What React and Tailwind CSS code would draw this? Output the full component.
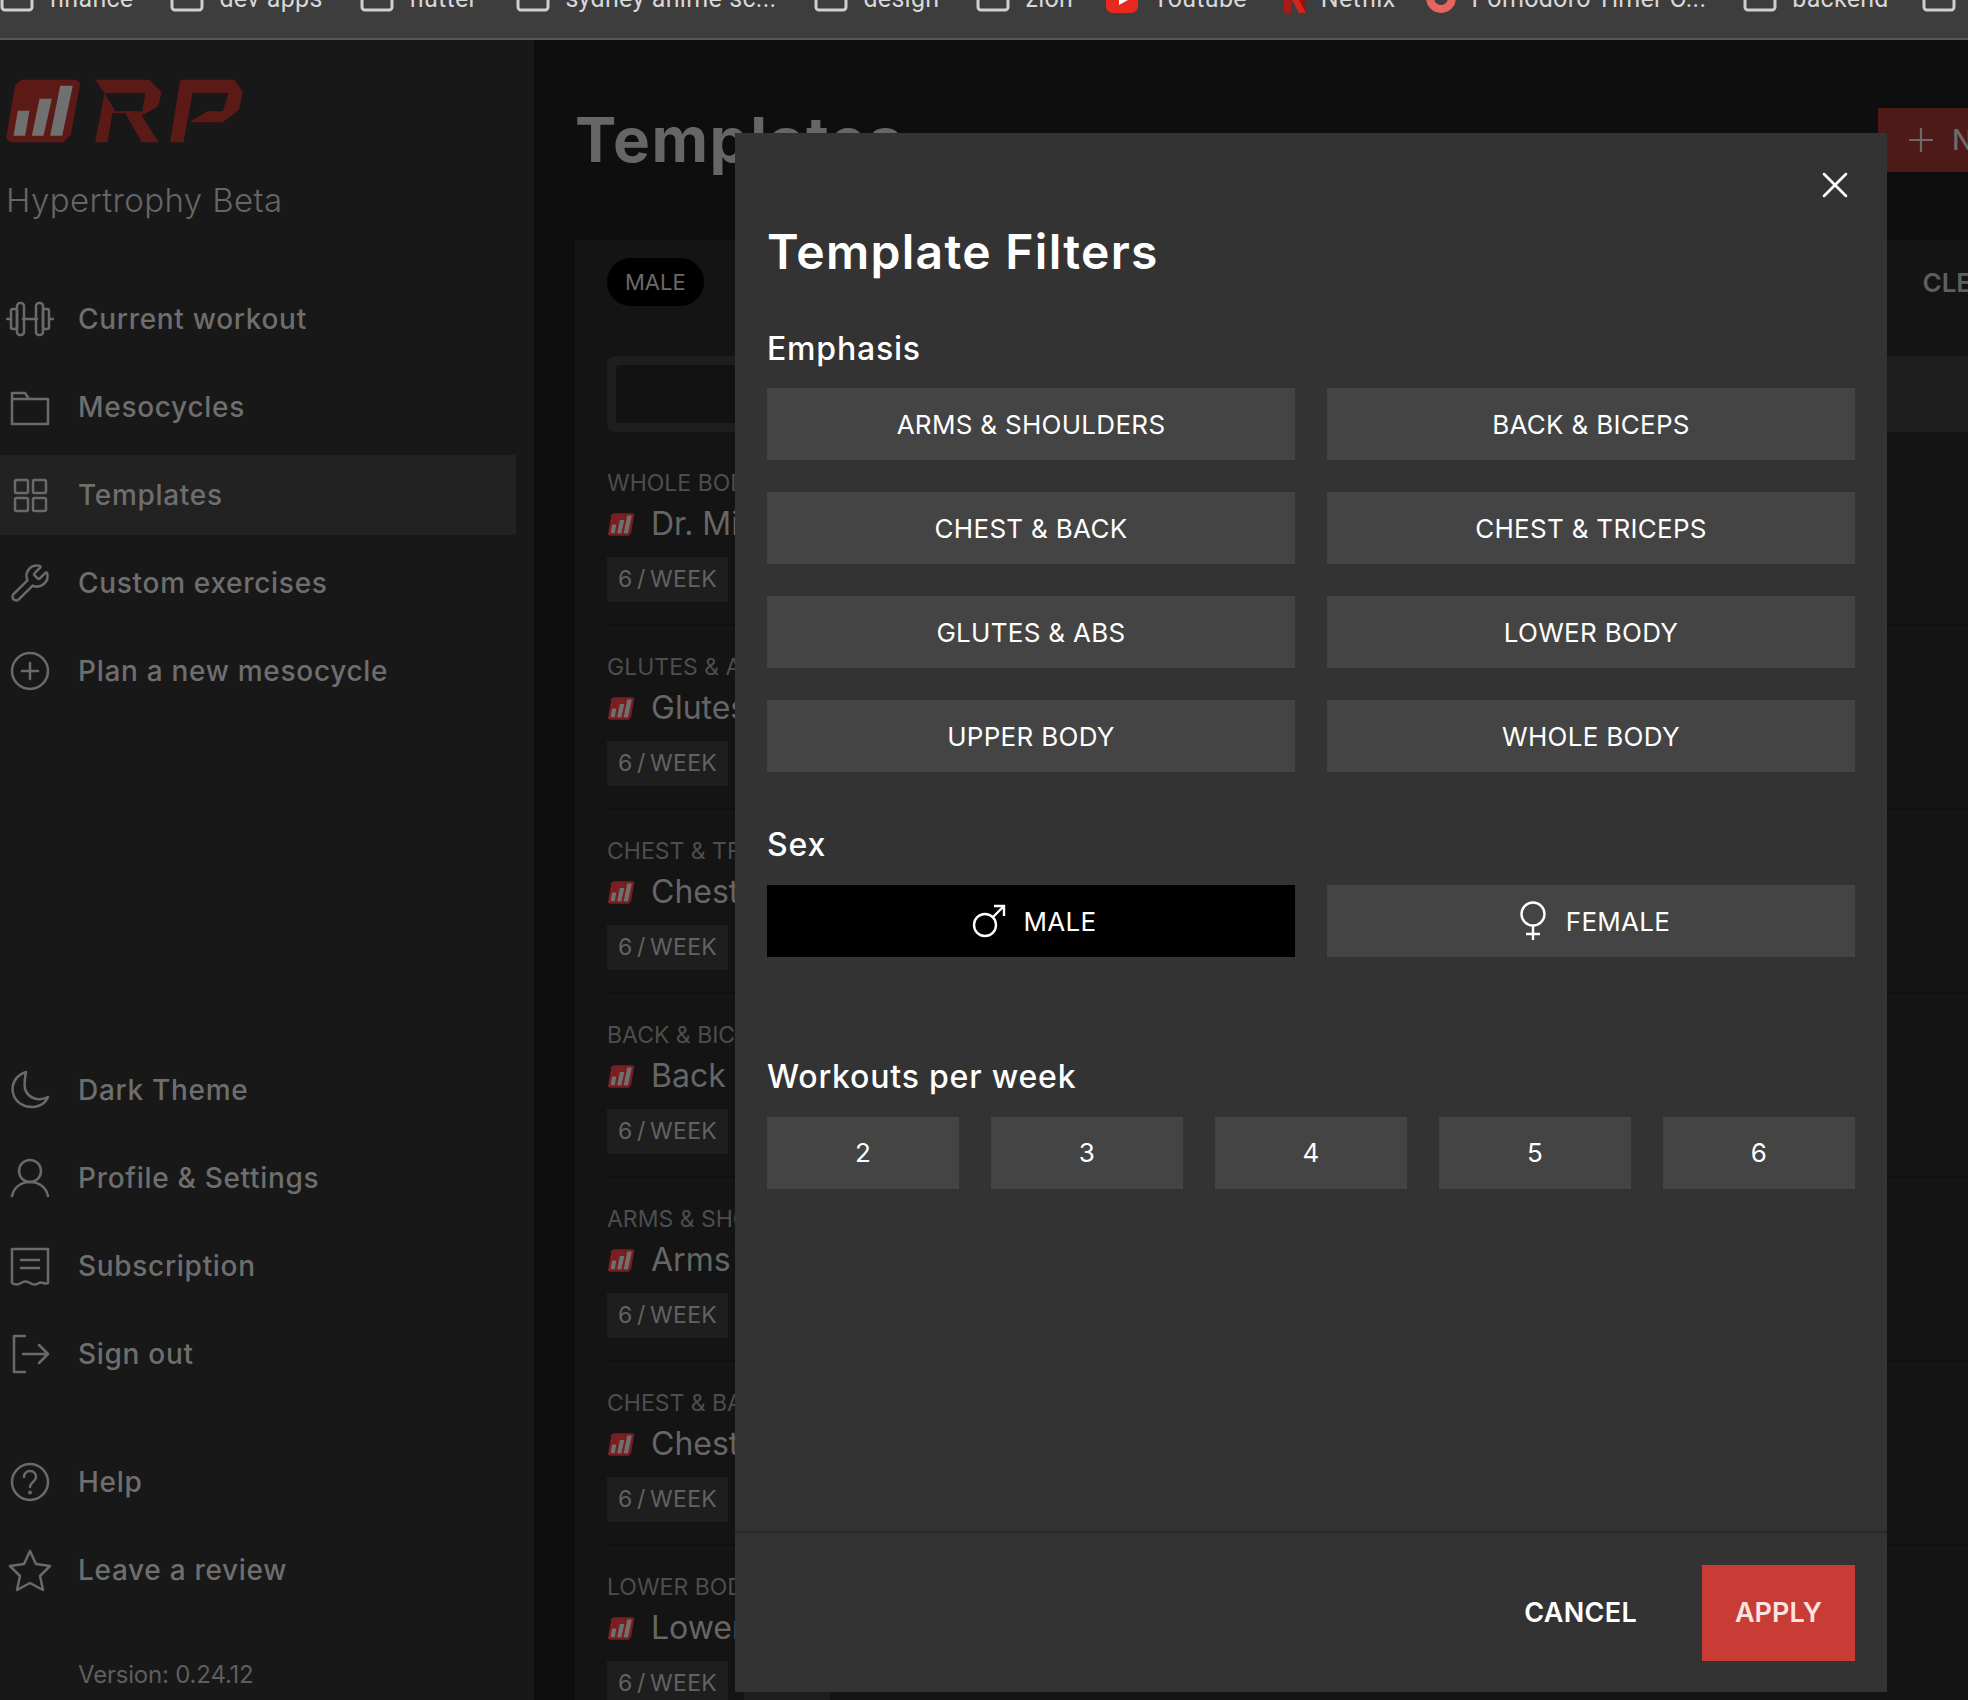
import React from "react";
import { Wrench, X, Plus } from "lucide-react";

const bookmarks = [
    { label: "finance", icon: "folder", gap: "mr-[37px]" },
    { label: "dev-apps", icon: "folder", gap: "mr-[37px]" },
    { label: "flutter", icon: "folder", gap: "mr-[39px]" },
    { label: "sydney-anime-sc...", icon: "folder", gap: "mr-[38px]" },
    { label: "design", icon: "folder", gap: "mr-[37px]" },
    { label: "zion", icon: "folder", gap: "mr-[33px]" },
    { label: "Youtube", icon: "youtube", gap: "mr-[37px]" },
    { label: "Netflix", icon: "netflix", gap: "mr-[31px]" },
    { label: "Pomodoro Timer O...", icon: "tomato", gap: "mr-[37px]" },
    { label: "backend", icon: "folder", gap: "mr-[33px]" },
    { label: "", icon: "folder", gap: "" },
];

const BookmarkIcon = ({ type }) => {
    if (type === "youtube") {
        return (
            <svg viewBox="0 0 32 28" className="h-7 w-8 shrink-0">
                <rect x="0" y="0" width="32" height="28" rx="7" fill="#e8291f" />
                <path d="M13 10l9 5-9 5z" fill="#fff" />
            </svg>
        );
    }
    if (type === "netflix") {
        return (
            <svg viewBox="0 0 22 28" className="h-7 w-[22px] shrink-0">
                <path d="M0 0h7v28H0z" fill="#a61c14" />
                <path d="M15 0h7v28h-7z" fill="#8f1610" />
                <path d="M0 0h7l15 28h-7z" fill="#d3251b" />
            </svg>
        );
    }
    if (type === "tomato") {
        return (
            <svg viewBox="0 0 30 28" className="h-7 w-[30px] shrink-0">
                <circle cx="15" cy="13" r="11" fill="none" stroke="#e8645e" strokeWidth="8" />
            </svg>
        );
    }
    return (
        <svg viewBox="0 0 34 28" className="h-7 w-[34px] shrink-0" fill="none" stroke="#cfcfcf" strokeWidth="3">
            <path d="M2 0v22a3 3 0 0 0 3 3h24a3 3 0 0 0 3-3V0" />
        </svg>
    );
};

const iconProps = {
    viewBox: "0 0 40 40",
    fill: "none",
    stroke: "#6a6a6a",
    strokeWidth: 2.5,
    strokeLinecap: "round",
    strokeLinejoin: "round",
    className: "h-10 w-10",
};

const DumbbellIcon = () => (
    <svg viewBox="0 0 48 40" fill="none" stroke="#6a6a6a" strokeWidth="2.5" strokeLinecap="round" strokeLinejoin="round" className="h-10 w-12">
        <path d="M1 20h4M47 20h-4M17 20h14" />
        <rect x="5" y="10" width="6" height="20" rx="2" />
        <rect x="11" y="4" width="7" height="32" rx="3" />
        <rect x="30" y="4" width="7" height="32" rx="3" />
        <rect x="37" y="10" width="6" height="20" rx="2" />
    </svg>
);

const FolderIcon = () => (
    <svg {...iconProps}>
        <path d="M2 6h13l4 6h19v25H2z" />
        <path d="M2 12h17" />
    </svg>
);

const GridIcon = () => (
    <svg {...iconProps}>
        <rect x="5" y="5" width="13" height="13" rx="1.5" />
        <rect x="23" y="5" width="13" height="13" rx="1.5" />
        <rect x="5" y="23" width="13" height="13" rx="1.5" />
        <rect x="23" y="23" width="13" height="13" rx="1.5" />
    </svg>
);

const PlusCircleIcon = () => (
    <svg {...iconProps}>
        <circle cx="20" cy="20" r="18" />
        <path d="M20 12v16M12 20h16" />
    </svg>
);

const MoonIcon = () => (
    <svg {...iconProps}>
        <path d="M16 2C6 5 1 14 3 23c2 9 11 15 21 14 7-1 12-5 14-10-10 5-20 1-23-8-1-6 0-12 1-17z" />
    </svg>
);

const UserIcon = () => (
    <svg {...iconProps}>
        <circle cx="20" cy="13" r="11" />
        <path d="M2 38c2-9 9-14 18-14s16 5 18 14" />
    </svg>
);

const ReceiptIcon = () => (
    <svg {...iconProps}>
        <path d="M2 3h36v34c-3 2-6-2-9 0s-6 2-9 0-6-2-9 0-6 2-9 0z" />
        <path d="M11 14h18M11 22h18" />
    </svg>
);

const SignOutIcon = () => (
    <svg {...iconProps}>
        <path d="M15 2H4v36h11" />
        <path d="M13 20h25M29 11l9 9-9 9" />
    </svg>
);

const HelpIcon = () => (
    <svg {...iconProps}>
        <circle cx="20" cy="20" r="18" />
        <path d="M14 15c0-4 3-6 6-6s6 2 6 6c0 5-6 5-6 10" />
        <circle cx="20" cy="30.5" r="0.8" />
    </svg>
);

const StarIcon = () => (
    <svg {...iconProps} viewBox="0 0 44 44" className="h-11 w-11">
        <path d="M22 3l6 13 14 2-10 10 3 14-13-7-13 7 3-14L2 18l14-2z" />
    </svg>
);

const BarsBadge = ({ red, bars, className }) => (
    <svg viewBox="10 55 235 198" className={className}>
        <path d="M65 60H228L240 70L212 225L190 248H30L18 235L45 75Z" fill={red} />
        <path d="M40 228H75L88 153H53Z" fill={bars} />
        <path d="M95 228H130L155 117H118Z" fill={bars} />
        <path d="M150 228H186L218 78H180Z" fill={bars} />
    </svg>
);

const Logo = () => (
    <svg viewBox="0 0 710 192" className="h-16 w-[237px]">
        <g transform="translate(-18 -58)">
            <path d="M65 60H228L240 70L212 225L190 248H30L18 235L45 75Z" fill="#5c1a16" />
            <path d="M40 228H75L88 153H53Z" fill="#707070" />
            <path d="M95 228H130L155 117H118Z" fill="#707070" />
            <path d="M150 228H186L218 78H180Z" fill="#707070" />
            <path
                fillRule="evenodd"
                d="M285 60H448L484 98L474 140L425 168L475 248H425L375 160H337L322 248H285L313 100ZM313 100L345 155H426L436 100Z"
                fill="#5c1a16"
            />
            <path d="M540 60H703L728 98L716 150L668 188H568L622 155H668L685 100H577L550 248H510Z" fill="#5c1a16" />
        </g>
    </svg>
);

const topNav = [
    { label: "Current workout", icon: <DumbbellIcon /> },
    { label: "Mesocycles", icon: <FolderIcon /> },
    { label: "Templates", icon: <GridIcon />, active: true },
    { label: "Custom exercises", icon: <Wrench size={42} strokeWidth={1.45} color="#6a6a6a" /> },
    { label: "Plan a new mesocycle", icon: <PlusCircleIcon /> },
];

const accountNav = [
    { label: "Dark Theme", icon: <MoonIcon /> },
    { label: "Profile & Settings", icon: <UserIcon /> },
    { label: "Subscription", icon: <ReceiptIcon /> },
    { label: "Sign out", icon: <SignOutIcon /> },
];

const helpNav = [
    { label: "Help", icon: <HelpIcon /> },
    { label: "Leave a review", icon: <StarIcon /> },
];

const NavRow = ({ item }) => (
    <div className={`flex h-20 items-center ${item.active ? "bg-[#222222]" : ""}`}>
        <span className="flex w-[60px] shrink-0 items-center justify-center">{item.icon}</span>
        <span className="ml-[18px] text-[28px] font-medium tracking-[0.7px] text-[#6e6e6e]">{item.label}</span>
    </div>
);

const templates = [
    { group: "WHOLE BODY", title: "Dr. Mike's Full Body" },
    { group: "GLUTES & ABS", title: "Glutes & Abs" },
    { group: "CHEST & TRICEPS", title: "Chest & Triceps" },
    { group: "BACK & BICEPS", title: "Back & Biceps" },
    { group: "ARMS & SHOULDERS", title: "Arms & Shoulders" },
    { group: "CHEST & BACK", title: "Chest & Back" },
    { group: "LOWER BODY", title: "Lower Body" },
];

const emphasis = [
    "ARMS & SHOULDERS",
    "BACK & BICEPS",
    "CHEST & BACK",
    "CHEST & TRICEPS",
    "GLUTES & ABS",
    "LOWER BODY",
    "UPPER BODY",
    "WHOLE BODY",
];

const MaleIcon = () => (
    <svg viewBox="0 0 34 34" fill="none" stroke="#fff" strokeWidth="2.4" className="h-[34px] w-[34px]">
        <circle cx="13" cy="21" r="11" />
        <path d="M21 13L32 2M22 2h10v10" />
    </svg>
);

const FemaleIcon = () => (
    <svg viewBox="0 0 30 40" fill="none" stroke="#fff" strokeWidth="2.4" className="h-10 w-[30px]">
        <circle cx="15" cy="13" r="11.5" />
        <path d="M15 25v14M8 33h14" />
    </svg>
);

const FilterButton = ({ children, dark, className = "" }) => (
    <button className={`flex h-[72px] items-center justify-center gap-[18px] text-[26px] tracking-[0.3px] text-white ${dark ? "bg-black" : "bg-[#444444]"} ${className}`}>
        {children}
    </button>
);

const SectionTitle = ({ children, className }) => (
    <h3 className={`text-[32px] font-medium leading-10 tracking-[0.8px] text-white ${className}`}>{children}</h3>
);

export default function App() {
    return (
        <div className="relative flex h-[1700px] w-[1968px] flex-col overflow-hidden bg-[#0e0e0e] font-[Inter,sans-serif]">
            <div className="h-10 shrink-0 overflow-hidden border-b-2 border-[#555555] bg-[#3d3d3d] font-[Roboto,sans-serif]">
                <div className="-mt-[15px] flex items-center">
                    {bookmarks.map((b, i) => (
                        <div key={i} className={`flex shrink-0 items-center gap-[15px] ${b.gap}`}>
                            <BookmarkIcon type={b.icon} />
                            {b.label && <span className="text-[25px] leading-[28px] tracking-[0.3px] text-[#d8d8d8]">{b.label}</span>}
                        </div>
                    ))}
                </div>
            </div>

            <div className="flex min-h-0 flex-1">
                <aside className="flex w-[534px] shrink-0 flex-col bg-[#181818] pr-[18px]">
                    <div className="ml-[6px] mt-[39px]">
                        <Logo />
                    </div>
                    <p className="ml-[6px] mt-[37px] text-[33px] font-light leading-10 tracking-[0.4px] text-[#666666]">Hypertrophy Beta</p>
                    <nav className="mt-[59px] flex flex-col gap-2">
                        {topNav.map((item) => (
                            <NavRow key={item.label} item={item} />
                        ))}
                    </nav>
                    <div className="mt-[339px] flex flex-col gap-2">
                        {accountNav.map((item) => (
                            <NavRow key={item.label} item={item} />
                        ))}
                    </div>
                    <div className="mt-[48px] flex flex-col gap-2">
                        {helpNav.map((item) => (
                            <NavRow key={item.label} item={item} />
                        ))}
                    </div>
                    <p className="ml-[78px] mt-[49px] text-[24px] leading-8 tracking-[-0.2px] text-[#5e5e5e]">Version: 0.24.12</p>
                </aside>

                <main className="ml-[41px] w-[1470px] shrink-0">
                    <div className="flex h-[200px] items-start justify-between">
                        <h1 className="mt-[64px] text-[62px] font-bold leading-[72px] tracking-[1.5px] text-[#666666]">Templates</h1>
                        <button className="mt-[68px] flex h-16 w-[167px] items-center gap-3 bg-[#4d1a18] pl-6 text-[28px] font-medium text-[#6b6b6b]">
                            <Plus size={38} strokeWidth={1.4} />
                            NEW
                        </button>
                    </div>
                    <section className="h-[1460px] bg-[#141414] px-8 pt-[18px]">
                        <div className="flex h-12 items-center justify-between">
                            <span className="flex h-12 items-center rounded-full bg-black px-[18px] text-[22px] text-[#6a6a6a]">MALE</span>
                            <span className="mr-[5px] text-[26px] font-semibold text-[#5e5e5e]">CLEAR</span>
                        </div>
                        <div className="mt-[50px] h-[76px] rounded-lg bg-[#1e1e1e] py-[9px] pl-[9px]">
                            <div className="h-full w-[600px] rounded bg-[#121212]" />
                        </div>
                        <div className="mt-[10px]">
                            {templates.map((t) => (
                                <div key={t.group} className="border-b-2 border-[#101010] pb-[22px] pt-[27px]">
                                    <div className="text-[23px] leading-7 text-[#4d4d4d]">{t.group}</div>
                                    <div className="mt-[7px] flex h-10 items-center gap-4">
                                        <BarsBadge red="#7a1f1f" bars="#707070" className="h-[25px] w-7" />
                                        <span className="text-[32px] text-[#666666]">{t.title}</span>
                                    </div>
                                    <div className="mt-[13px] flex gap-4">
                                        <span className="flex h-[45px] w-[121px] items-center justify-center bg-[#1e1e1e] text-[23px] tracking-[0.3px] text-[#626262]">6{"\u2009"}/{"\u2009"}WEEK</span>
                                        <span className="h-[45px] w-[86px] bg-[#1e1e1e]" />
                                    </div>
                                </div>
                            ))}
                        </div>
                    </section>
                </main>
            </div>

            <div className="absolute left-[735px] top-[133px] flex h-[1559px] w-[1152px] flex-col bg-[#333333]">
                <X className="absolute right-[30px] top-[30px]" size={44} strokeWidth={1.4} color="#ffffff" />
                <div className="flex-1 px-8">
                    <h2 className="mt-[90px] text-[48px] font-semibold leading-[58px] tracking-[1.3px] text-white">Template Filters</h2>
                    <SectionTitle className="mt-[48px]">Emphasis</SectionTitle>
                    <div className="mt-[19px] grid grid-cols-2 gap-8">
                        {emphasis.map((name) => (
                            <FilterButton key={name}>{name}</FilterButton>
                        ))}
                    </div>
                    <SectionTitle className="mt-[53px]">Sex</SectionTitle>
                    <div className="mt-[20px] grid grid-cols-2 gap-8">
                        <FilterButton dark className="pl-[6px]">
                            <MaleIcon />
                            MALE
                        </FilterButton>
                        <FilterButton className="pl-[6px]">
                            <FemaleIcon />
                            FEMALE
                        </FilterButton>
                    </div>
                    <SectionTitle className="mt-[100px]">Workouts per week</SectionTitle>
                    <div className="mt-[20px] grid grid-cols-5 gap-8">
                        {[2, 3, 4, 5, 6].map((n) => (
                            <FilterButton key={n} className="pb-[2px]">{n}</FilterButton>
                        ))}
                    </div>
                </div>
                <div className="flex h-[161px] items-start justify-end border-t-2 border-[#282828] px-8 pt-8">
                    <button className="mr-[65px] h-24 text-[27px] font-semibold tracking-[0.3px] text-white">CANCEL</button>
                    <button className="h-24 w-[153px] bg-[#c93c35] text-[27px] font-semibold text-[#fbe3e2]">APPLY</button>
                </div>
            </div>
        </div>
    );
}
